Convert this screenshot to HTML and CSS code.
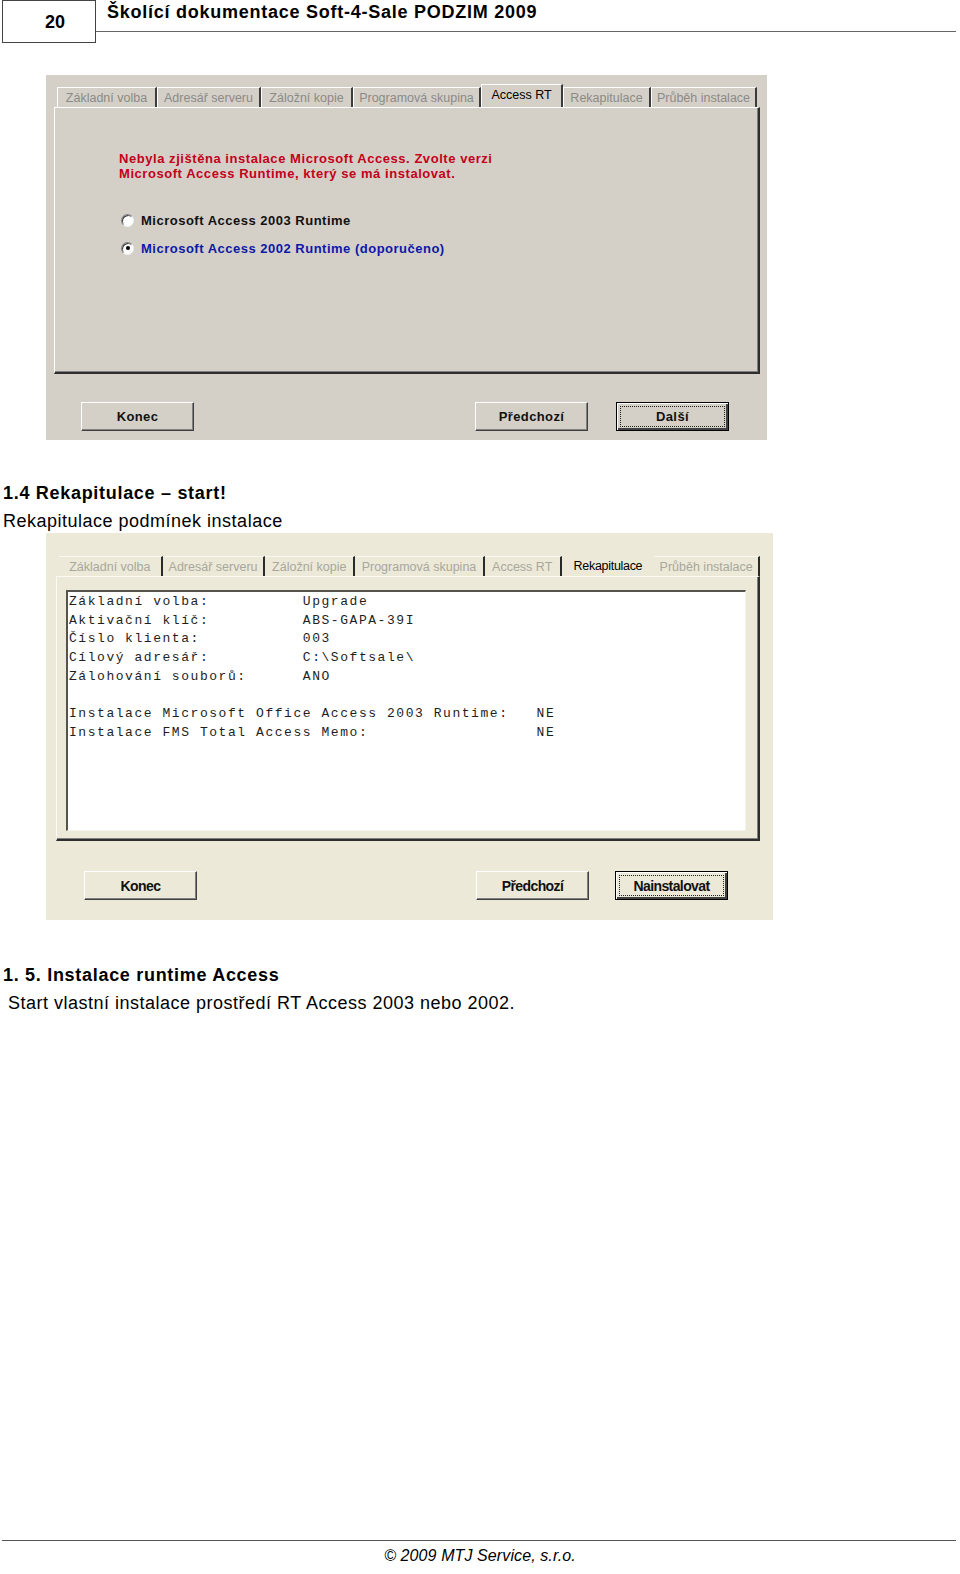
FILE: index.html
```html
<!DOCTYPE html>
<html lang="cs">
<head>
    <meta charset="UTF-8">
    <title>Školící dokumentace Soft-4-Sale PODZIM 2009</title>
    <link rel="stylesheet" href="styles.css">
</head>
<body>
    <div class="page">
        <div class="header">
            <div class="page-no">20</div>
            <div class="doc-title">Školící dokumentace Soft-4-Sale PODZIM 2009</div>
        </div>

        <!-- dialog 1: Access RT -->
        <div class="shot classic">
            <div class="tabs">
                <div class="tab" style="width:100px">Základní volba</div>
                <div class="tab" style="width:104px">Adresář serveru</div>
                <div class="tab" style="width:92px">Záložní kopie</div>
                <div class="tab" style="width:128px">Programová skupina</div>
                <div class="tab active" style="width:82px">Access RT</div>
                <div class="tab" style="width:88px">Rekapitulace</div>
                <div class="tab" style="width:106px">Průběh instalace</div>
            </div>
            <div class="panel">
                <p class="warning">Nebyla zjištěna instalace Microsoft Access. Zvolte verzi<br>Microsoft Access Runtime, který se má instalovat.</p>
                <div class="option"><span class="radio"></span>Microsoft Access 2003 Runtime</div>
                <div class="option selected"><span class="radio checked"></span>Microsoft Access 2002 Runtime (doporučeno)</div>
            </div>
            <div class="buttons">
                <div class="btn">Konec</div>
                <div class="spacer"></div>
                <div class="btn">Předchozí</div>
                <div class="btn default"><span>Další</span></div>
            </div>
        </div>

        <h3 class="section">1.4 Rekapitulace – start!</h3>
        <p class="text">Rekapitulace podmínek instalace</p>

        <!-- dialog 2: Rekapitulace -->
        <div class="shot xp">
            <div class="tabs">
                <div class="tab" style="width:104px">Základní volba</div>
                <div class="tab" style="width:103px">Adresář serveru</div>
                <div class="tab" style="width:90px">Záložní kopie</div>
                <div class="tab" style="width:130px">Programová skupina</div>
                <div class="tab" style="width:77px">Access RT</div>
                <div class="tab active" style="width:93px">Rekapitulace</div>
                <div class="tab" style="width:106px">Průběh instalace</div>
            </div>
            <div class="panel">
                <pre class="summary">Základní volba:          Upgrade
Aktivační klíč:          ABS-GAPA-39I
Číslo klienta:           003
Cílový adresář:          C:\Softsale\
Zálohování souborů:      ANO

Instalace Microsoft Office Access 2003 Runtime:   NE
Instalace FMS Total Access Memo:                  NE</pre>
            </div>
            <div class="buttons">
                <div class="btn">Konec</div>
                <div class="spacer"></div>
                <div class="btn">Předchozí</div>
                <div class="btn default"><span>Nainstalovat</span></div>
            </div>
        </div>

        <h3 class="section second">1. 5. Instalace runtime Access</h3>
        <p class="text indent">Start vlastní instalace prostředí RT Access 2003 nebo 2002.</p>

        <div class="footer">© 2009 MTJ Service, s.r.o.</div>
    </div>
</body>
</html>
```

FILE: styles.css
```css
* {
    box-sizing: border-box;
    margin: 0;
    padding: 0;
}

body {
    background: #fff;
    color: #000;
    font-family: 'Liberation Sans', Arial, sans-serif;
}

.page {
    width: 960px;
    min-height: 100vh;
    display: flex;
    flex-direction: column;
}

/* header */

.header {
    display: flex;
    height: 43px;
    padding: 0 4px 0 2px;
}

.page-no {
    width: 94px;
    height: 43px;
    border: 1px solid #444;
    display: flex;
    align-items: center;
    justify-content: center;
    font-weight: bold;
    font-size: 18px;
    padding: 1px 0 0 12px;
}

.doc-title {
    flex: 1;
    height: 32px;
    border-bottom: 1px solid #666;
    padding-left: 11px;
    font-weight: bold;
    font-size: 18px;
    letter-spacing: 0.75px;
    line-height: 24px;
}

/* dialog screenshots */

.shot {
    margin-left: 46px;
    display: flex;
    flex-direction: column;
    font-family: 'Liberation Sans', Arial, sans-serif;
}

.shot.classic {
    width: 721px;
    height: 365px;
    margin-top: 32px;
    background: #d4d0c8;
    padding: 9px 7px 0 8px;
}

.shot.xp {
    width: 727px;
    height: 387px;
    margin-top: 1px;
    background: #ece9d8;
    padding: 20px 13px 0 10px;
}

.tabs {
    display: flex;
    align-items: flex-end;
    height: 23px;
    margin-left: 3px;
}

.tab {
    height: 20px;
    font-size: 12.5px;
    color: #8c8a86;
    text-align: center;
    line-height: 20px;
    white-space: nowrap;
    border-top: 1px solid #fff;
    border-left: 1px solid #fff;
    border-right: 2px solid #3c3c3c;
}

.tab.active {
    height: 23px;
    color: #000;
    line-height: 21px;
}

.xp .tab {
    color: #a9a79c;
    border-left: none;
    border-right: 2px solid #2a2a2a;
    border-top: 1px solid #f8f7f0;
}

.xp .tab.active {
    height: 20px;
    color: #000;
    border: none;
    letter-spacing: -0.3px;
}

.panel {
    height: 267px;
    border-top: 1px solid #fff;
    border-left: 1px solid #fff;
    border-right: 2px solid #2e2e2e;
    border-bottom: 2px solid #2e2e2e;
    box-shadow: inset -1px -1px 0 #808080;
    padding: 43px 0 0 64px;
}

.xp .panel {
    height: 265px;
    border-top: 1px solid #fbfaf4;
    border-left: 1px solid #fbfaf4;
    padding: 13px 12px 8px 9px;
}

.warning {
    color: #c4001a;
    font-weight: bold;
    font-size: 13px;
    line-height: 15px;
    letter-spacing: 0.55px;
    margin-bottom: 25px;
}

.option {
    display: flex;
    align-items: center;
    height: 28px;
    font-weight: bold;
    font-size: 13px;
    color: #111;
    letter-spacing: 0.5px;
    padding-left: 2px;
}

.option.selected {
    color: #0c18a8;
}

.radio {
    width: 13px;
    height: 13px;
    border-radius: 50%;
    background: #fff;
    border: 1px solid;
    border-color: #808080 #f0f0f0 #f0f0f0 #808080;
    box-shadow: inset 1px 1px 0 #404040;
    margin-right: 7px;
    display: flex;
    align-items: center;
    justify-content: center;
}

.radio.checked::after {
    content: '';
    width: 4px;
    height: 4px;
    border-radius: 50%;
    background: #000;
}

.summary {
    height: 100%;
    background: #fff;
    border-top: 2px solid #55544c;
    border-left: 2px solid #55544c;
    border-right: 1px solid #f4f3ee;
    border-bottom: 1px solid #f4f3ee;
    font-family: 'Liberation Mono', 'Courier New', monospace;
    font-size: 13px;
    letter-spacing: 1.55px;
    line-height: 18.7px;
    color: #1e1e1e;
    padding: 1px 0 0 1px;
}

/* dialog buttons */

.buttons {
    display: flex;
    gap: 28px;
    margin-top: 28px;
    padding: 0 31px 0 27px;
}

.xp .buttons {
    gap: 26px;
    margin-top: 30px;
    padding: 0 32px 0 28px;
}

.spacer {
    flex: 1;
}

.btn {
    width: 113px;
    height: 29px;
    border-top: 1px solid #fff;
    border-left: 1px solid #fff;
    border-right: 1px solid #404040;
    border-bottom: 1px solid #404040;
    box-shadow: inset -1px -1px 0 #808080;
    display: flex;
    align-items: center;
    justify-content: center;
    font-weight: bold;
    font-size: 13px;
    letter-spacing: 0.4px;
    color: #111;
}

.xp .btn {
    font-size: 14px;
    letter-spacing: -0.6px;
}

.btn.default {
    border: 1px solid #000;
    box-shadow: inset 1px 1px 0 #fff, inset -2px -2px 0 #404040;
    padding: 3px;
}

.btn.default span {
    flex: 1;
    align-self: stretch;
    display: flex;
    align-items: center;
    justify-content: center;
    border: 1px dotted #222;
}

/* text */

.section {
    font-size: 18px;
    font-weight: bold;
    line-height: 22px;
    letter-spacing: 0.7px;
    padding-left: 3px;
    margin-top: 42px;
}

.section.second {
    margin-top: 44px;
}

.text {
    font-size: 18px;
    line-height: 22px;
    letter-spacing: 0.5px;
    padding-left: 3px;
    margin-top: 6px;
}

.text.indent {
    padding-left: 8px;
}

.footer {
    margin: auto 4px 0 2px;
    border-top: 1px solid #555;
    height: 34px;
    text-align: center;
    font-style: italic;
    font-size: 16px;
    letter-spacing: 0.1px;
    line-height: 30px;
    padding-left: 2px;
}
```
